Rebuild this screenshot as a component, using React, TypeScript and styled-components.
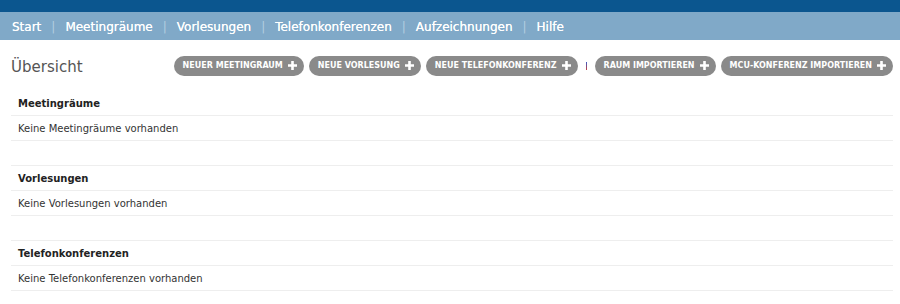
import React from 'react';
import styled, { createGlobalStyle } from 'styled-components';

const GlobalStyle = createGlobalStyle`
  body {
    margin: 0;
    background: #fff;
    font-family: Verdana, 'DejaVu Sans', sans-serif;
  }
`;

const navItems = ['Start', 'Meetingräume', 'Vorlesungen', 'Telefonkonferenzen', 'Aufzeichnungen', 'Hilfe'];

const sections = [
  { title: 'Meetingräume', empty: 'Keine Meetingräume vorhanden' },
  { title: 'Vorlesungen', empty: 'Keine Vorlesungen vorhanden' },
  { title: 'Telefonkonferenzen', empty: 'Keine Telefonkonferenzen vorhanden' },
];

const TopBar = styled.div`
  height: 12px;
  background: #0b568f;
`;

const Nav = styled.nav`
  height: 28px;
  background: #80a9c8;
  display: flex;
  align-items: center;
  padding: 1px 0 0 12px;
  box-sizing: border-box;
  font-size: 12px;
  color: #fff;
`;

const NavLink = styled.a`
  color: #fff;
  text-decoration: none;
  text-shadow: 0 0 0.4px #fff;
`;

const NavSep = styled.span`
  color: #b3cde0;
  margin: 0 10px;
`;

const Main = styled.main`
  padding: 0 7px 0 11px;
`;

const Header = styled.div`
  display: flex;
  align-items: center;
  justify-content: space-between;
  height: 51px;
`;

const Title = styled.h1`
  margin: 0;
  font-size: 15px;
  font-weight: normal;
  color: #555;
  padding-top: 2px;
`;

const Actions = styled.div`
  display: flex;
  align-items: center;
  gap: 5px;
`;

const ActionButton = styled.button`
  display: inline-flex;
  align-items: center;
  gap: 5px;
  height: 20px;
  padding: 0 7px 0 9px;
  border: none;
  border-radius: 10px;
  background: #8a8a8a;
  color: #fff;
  font-family: Verdana, 'DejaVu Sans', sans-serif;
  font-size: 8px;
  font-weight: bold;
  text-transform: uppercase;
  cursor: pointer;
`;

const Divider = styled.span`
  width: 1px;
  height: 8px;
  margin: 0 3px;
  background: linear-gradient(#3b5bc7, #c34040);
`;

const Section = styled.section<{ $first?: boolean }>`
  margin-top: ${(p) => (p.$first ? '0' : '24px')};
  border-top: ${(p) => (p.$first ? 'none' : '1px solid #eee')};
`;

const Row = styled.div<{ $head?: boolean }>`
  height: 24px;
  display: flex;
  align-items: center;
  padding-left: 7px;
  border-bottom: 1px solid #eee;
  font-size: 10px;
  color: ${(p) => (p.$head ? '#222' : '#333')};
  font-weight: ${(p) => (p.$head ? 'bold' : 'normal')};
`;

const Plus = () => (
  <svg width="9" height="9" viewBox="0 0 9 9">
    <path d="M3.2 0h2.6v3.2H9v2.6H5.8V9H3.2V5.8H0V3.2h3.2z" fill="#fff" />
  </svg>
);

const buttons = ['Neuer Meetingraum', 'Neue Vorlesung', 'Neue Telefonkonferenz'];
const importButtons = ['Raum importieren', 'MCU-Konferenz importieren'];

export default function App() {
  return (
    <>
      <GlobalStyle />
      <TopBar />
      <Nav>
        {navItems.map((item, i) => (
          <React.Fragment key={item}>
            {i > 0 && <NavSep>|</NavSep>}
            <NavLink href="#">{item}</NavLink>
          </React.Fragment>
        ))}
      </Nav>
      <Main>
        <Header>
          <Title>Übersicht</Title>
          <Actions>
            {buttons.map((b) => (
              <ActionButton key={b}>
                {b}
                <Plus />
              </ActionButton>
            ))}
            <Divider />
            {importButtons.map((b) => (
              <ActionButton key={b}>
                {b}
                <Plus />
              </ActionButton>
            ))}
          </Actions>
        </Header>
        {sections.map((s, i) => (
          <Section key={s.title} $first={i === 0}>
            <Row $head>{s.title}</Row>
            <Row>{s.empty}</Row>
          </Section>
        ))}
      </Main>
    </>
  );
}
